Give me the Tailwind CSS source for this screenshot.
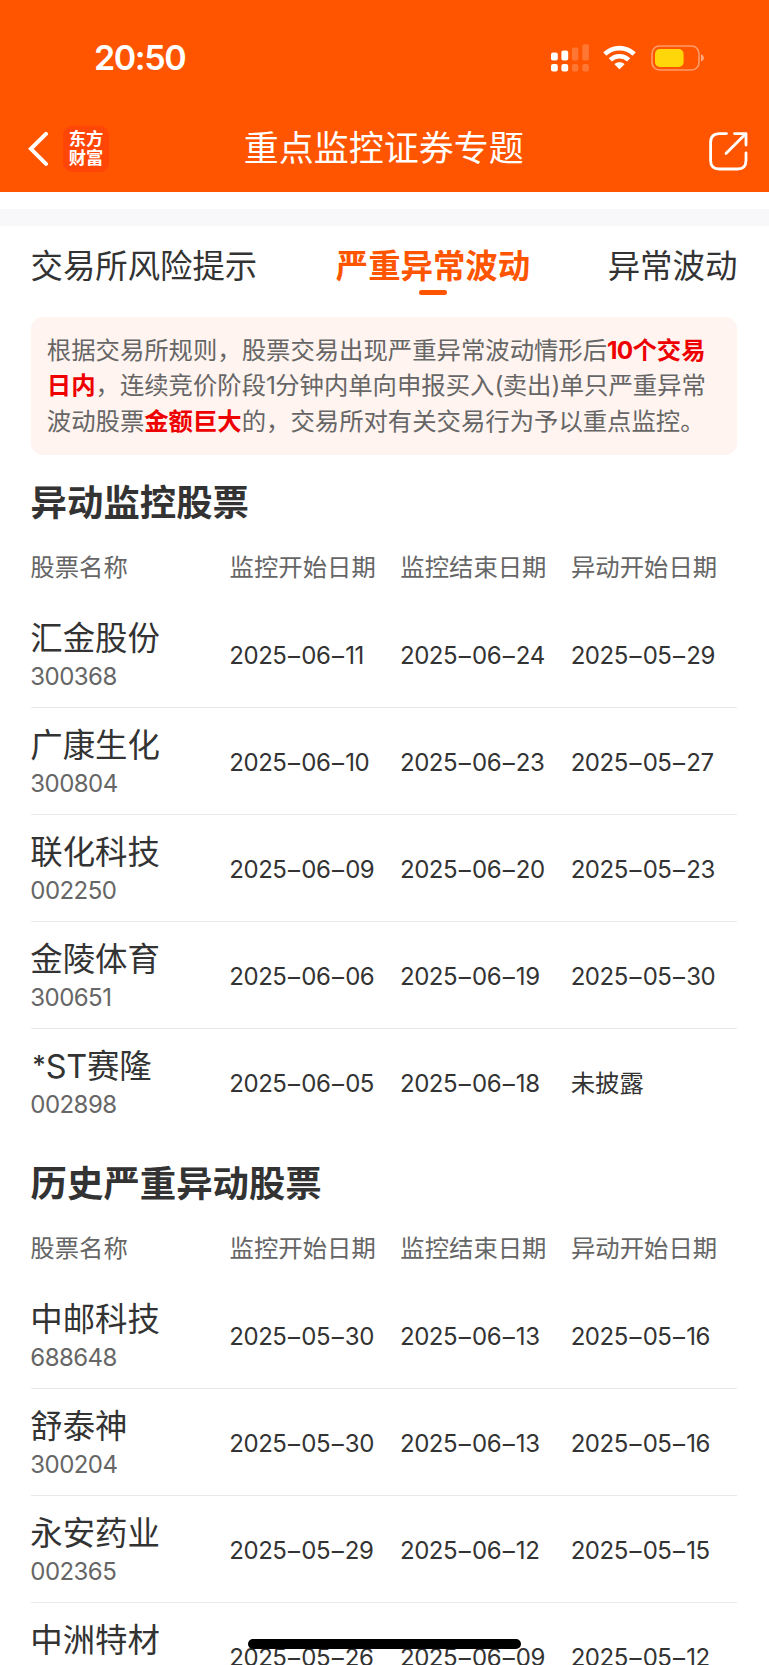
<!DOCTYPE html>
<html lang="zh-CN">
<head>
<meta charset="utf-8">
<title>重点监控证券专题</title>
<script src="https://cdn.jsdelivr.net/npm/@tailwindcss/browser@4"></script>
</head>
<body class="bg-white">
<div class="relative w-[769px] h-[1665px] overflow-hidden bg-white text-[#333333] font-['Inter','Noto_Sans_CJK_SC',sans-serif]">
  <header class="h-[191.5px] bg-[#ff5500] text-white">
    <div class="flex h-[115px] items-center pl-[94px] pr-[63.5px]">
      <div class="text-[34px] leading-none font-semibold tracking-[-1.4px]">20:50</div>
      <svg class="ml-auto w-[39px] h-[28px]" viewBox="0 0 39 28" fill="#fff">
        <rect x="0" y="8.6" width="6.8" height="8" rx="2"/><rect x="10.4" y="6.6" width="6.8" height="10" rx="2"/>
        <g opacity=".2"><rect x="20.9" y="3.4" width="6.4" height="13.2" rx="2"/><rect x="31.3" y="0.2" width="6.6" height="16.4" rx="2"/><rect x="20.9" y="20" width="6.4" height="7.6" rx="2"/><rect x="31.3" y="20" width="6.6" height="7.6" rx="2"/></g>
        <rect x="0" y="20" width="6.8" height="7.6" rx="2"/><rect x="10.4" y="20" width="6.8" height="7.6" rx="2"/>
      </svg>
      <svg class="ml-[13px] w-[33px] h-[25px]" viewBox="0 0 33 25" fill="none" stroke="#fff" stroke-width="4.6">
        <path d="M1.8 9C10.2 1.1 22.8 1.1 31.2 9"/><path d="M7.3 14.9C12.6 10 20.4 10 25.7 14.9"/>
        <path d="M16.5 24.3L11.4 19.2C14.3 16.7 18.7 16.7 21.6 19.2Z" fill="#fff" stroke="none"/>
      </svg>
      <svg class="ml-[14.5px] w-[55px] h-[26px]" viewBox="0 0 55 26">
        <rect x="1" y="1" width="47" height="24" rx="7.5" fill="none" stroke="#fff" stroke-opacity=".42" stroke-width="1.6"/>
        <rect x="4" y="4" width="28.6" height="18" rx="4.8" fill="#ffd60a"/>
        <path d="M50 9.3Q53 10.5 53 13T50 16.7Z" fill="#fff" fill-opacity=".5"/>
      </svg>
    </div>
    <div class="flex h-[68px] items-center pl-[26px] pr-[19.7px]">
      <svg class="w-[22px] h-[36px]" viewBox="0 0 22 36" fill="none" stroke="#fff" stroke-width="4" stroke-linecap="round"><path d="M20 2.8L4.9 17.8L20 32.8"/></svg>
      <div class="ml-[15px] flex h-[46px] w-[46px] flex-col items-center justify-center rounded-[9px] bg-[#ff4606] pb-[2px] text-[17.3px] leading-[19px] font-bold"><span>东方</span><span>财富</span></div>
      <h1 class="ml-[134.7px] -mt-[1.6px] text-[35px] leading-[50px] font-normal">重点监控证券专题</h1>
      <svg class="mt-1 ml-auto w-[41px] h-[41px]" viewBox="0 0 41 41" fill="none" stroke="#fff" stroke-width="2.8" stroke-linecap="round" stroke-linejoin="round"><path d="M18.5 2.6H11.5Q2.6 2.6 2.6 11.5V29.5Q2.6 38 11.5 38H29.5Q38 38 38 29.5V22"/><path d="M26.5 2.6H38V14M37.5 3L18 22.5"/></svg>
    </div>
  </header>
  <div class="mt-[17.5px] h-[16.5px] bg-[#f8f8fa]"></div>

  <nav class="flex h-[91.8px] justify-between pl-[30.5px] pr-[31.7px] pt-[17px] text-[32.4px] leading-[48px]">
    <span>交易所风险提示</span>
    <span class="ml-px flex flex-col items-center font-bold text-[#ff5500]">严重异常波动<i class="-mt-px h-[5px] w-[28px] rounded-full bg-[#ff5500]"></i></span>
    <span>异常波动</span>
  </nav>

  <p class="mx-[31px] h-[137.7px] w-[706px] rounded-[12px] bg-[#fff4f0] pt-[15.8px] pl-[15.8px] text-[24.37px] leading-[35.2px] whitespace-nowrap text-[#666666]">根据交易所规则，股票交易出现严重异常波动情形后<b class="text-[#ee0000]"><span class="tracking-[-0.8px]">10</span>个交易</b><br><b class="text-[#ee0000]">日内</b>，连续竞价阶段<span class="tracking-[-0.8px]">1</span>分钟内单向申报买入<span class="tracking-[-0.6px]">(</span>卖出<span class="tracking-[-0.6px]">)</span>单只严重异常<br>波动股票<b class="text-[#ee0000]">金额巨大</b>的，交易所对有关交易行为予以重点监控。</p>

  <main id="tables" class="pl-[31px] pr-[32px]"></main>

  <div class="absolute left-[248px] top-[1639px] h-[10px] w-[273px] rounded-full bg-black"></div>
</div>
<script>
const tables = [
  ['异动监控股票', [
    ['汇金股份','300368','2025–06–11','2025–06–24','2025–05–29'],
    ['广康生化','300804','2025–06–10','2025–06–23','2025–05–27'],
    ['联化科技','002250','2025–06–09','2025–06–20','2025–05–23'],
    ['金陵体育','300651','2025–06–06','2025–06–19','2025–05–30'],
    ['*ST赛隆','002898','2025–06–05','2025–06–18','未披露']]],
  ['历史严重异动股票', [
    ['中邮科技','688648','2025–05–30','2025–06–13','2025–05–16'],
    ['舒泰神','300204','2025–05–30','2025–06–13','2025–05–16'],
    ['永安药业','002365','2025–05–29','2025–06–12','2025–05–15'],
    ['中洲特材','','2025–05–26','2025–06–09','2025–05–12']]]
];
const name = s => s.replace('*ST', '<span class="tracking-[-0.2px]"><span class="pl-[2px] text-[26px] leading-none align-[4px] font-medium">*</span>ST</span>');
const date = s => s.replace(/–/g, '<span class="px-[1.6px]">–</span>');
document.getElementById('tables').innerHTML = tables.map(([title, rows]) => `
  <section>
    <h2 class="-ml-[0.4px] h-[94px] pt-[23px] text-[36.4px] leading-[50px] font-bold">${title}</h2>
    <div class="-ml-[0.7px] grid h-[52.3px] grid-cols-[199.3px_170.7px_170.7px_1fr] text-[24.37px] leading-[36px] whitespace-nowrap text-[#666666]">
      <span>股票名称</span><span>监控开始日期</span><span>监控结束日期</span><span>异动开始日期</span>
    </div>
    ${rows.map(r => `
    <div class="grid h-[106.95px] grid-cols-[198.3px_170.7px_170.7px_1fr] border-b border-[#e9e9e9] last:border-b-0 text-[24.37px] whitespace-nowrap">
      <div class="-ml-[0.7px] pt-[15px]">
        <div class="h-[46px] text-[32.4px] leading-[46px]">${name(r[0])}</div>
        <div class="text-[24px] leading-[30px] tracking-[-0.55px] text-[#666666]">${r[1]}</div>
      </div>
      ${r.slice(2).map(d => `<div class="${d[0] === '2' ? 'pt-[37.2px] leading-[36px] text-[24px] tracking-[-0.45px]' : 'pt-[35.5px] leading-[36px]'}">${date(d)}</div>`).join('')}
    </div>`).join('')}
  </section>`).join('');
</script>
</body>
</html>
